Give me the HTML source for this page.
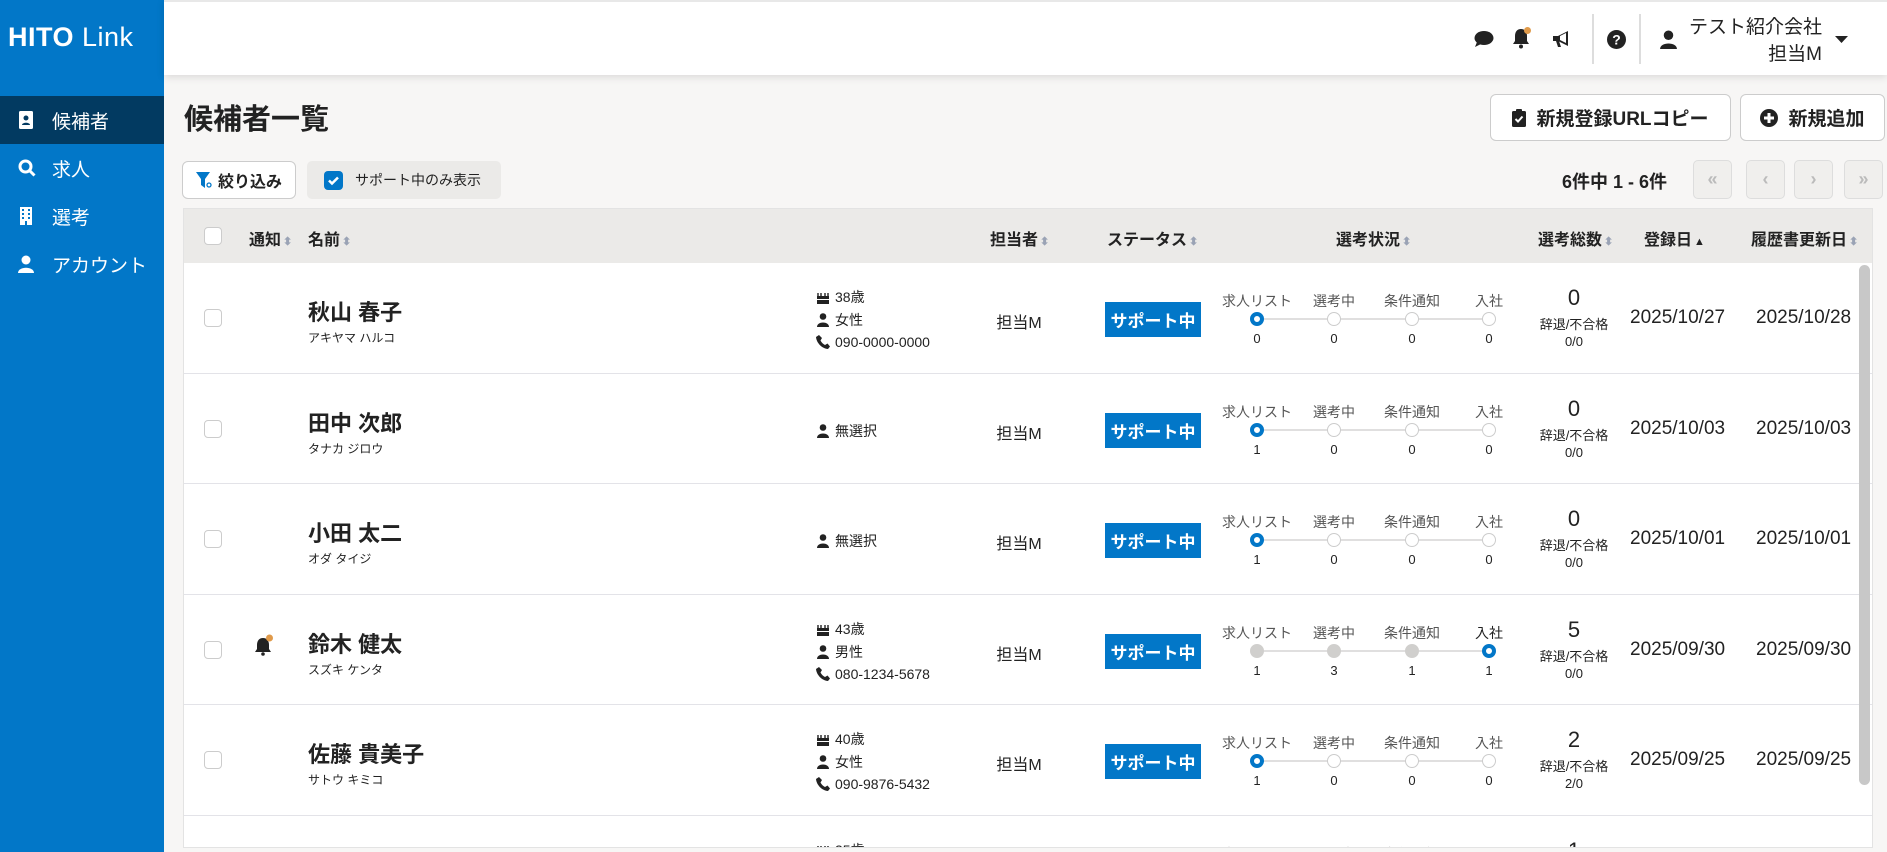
<!DOCTYPE html>
<html><head><meta charset="utf-8"><style>
*{box-sizing:border-box;margin:0;padding:0}
html{width:1887px;height:852px;overflow:hidden}
body{width:1887px;height:852px;overflow:hidden;background:#f7f6f5;font-family:"Liberation Sans","Noto Sans CJK JP",sans-serif;color:#222;position:relative}
.a{position:absolute}
#side{left:0;top:0;width:164px;height:852px;background:#0277c8;color:#fff}
.logo{left:8px;top:22px;font-size:27px;letter-spacing:.5px}
.logo b{font-weight:bold}
.nav{left:0;width:164px;height:48px;font-size:19px;display:flex;align-items:center;padding-left:52px}
.nav svg{position:absolute;left:18px;top:15px}
#top{left:164px;top:0;width:1723px;height:75px;background:#fff;box-shadow:0 2px 8px rgba(0,0,0,.12);border-top:2px solid #e8e8e8}
.btn{background:#fff;border:1px solid #ccc;border-radius:6px;display:flex;align-items:center;justify-content:center;font-weight:bold;font-size:19px;gap:10px}
.pg{width:39px;height:39px;border:1px solid #ddd;border-radius:5px;background:#f0efed;color:#bbb;font-size:18px;display:flex;align-items:center;justify-content:center;font-weight:bold}
#tbl{left:183px;top:208px;width:1690px;height:640px;background:#fff;border:1px solid #e3e3e3;overflow:hidden}
.hd{position:absolute;left:0;top:0;width:100%;height:54px;background:#ebeae8}
.ht{position:absolute;top:17px;font-size:16px;font-weight:bold;white-space:nowrap}
.ht i{font-style:normal;color:#9aa3b5;font-size:11px;margin-left:2px}
.cb{position:absolute;width:18px;height:18px;border:1px solid #ccc;border-radius:4px;background:#fff}
.row{position:absolute;left:0;width:100%;height:110.5px;border-bottom:1px solid #e3e3e8}
.nm{position:absolute;left:124px;top:32px;font-size:22px;font-weight:bold}
.kn{position:absolute;left:124px;top:66px;font-size:12px}
.inf{position:absolute;left:632px;font-size:14px;display:flex;align-items:center;gap:5px;white-space:nowrap}
.tan{position:absolute;left:800px;top:46px;font-size:16px;width:70px;text-align:center;white-space:nowrap}
.bd{position:absolute;left:921px;top:39px;width:96px;height:35px;background:#0277c8;color:#fff;font-weight:bold;font-size:17px;display:flex;align-items:center;justify-content:center}
.sl{position:absolute;top:28px;font-size:14px;color:#555;width:90px;text-align:center;margin-left:-45px}
.ln{position:absolute;left:1073px;top:55px;width:232px;height:2px;background:#e0dfdf}
.ci{position:absolute;top:49px;width:14px;height:14px;margin-left:-7px;border:1.5px solid #ccc;border-radius:50%;background:#fff}
.ci.on{border:4px solid #0277c8}
.ci.g{background:#d0cfcd;border-color:#d0cfcd}
.sn{position:absolute;top:68px;font-size:13px;width:30px;margin-left:-15px;text-align:center}
.tn{position:absolute;left:1360px;top:22px;width:60px;text-align:center;font-size:22px}
.tj{position:absolute;left:1340px;top:53px;width:100px;text-align:center;font-size:13px;line-height:17px}
.dt{position:absolute;top:44px;font-size:19px}
</style></head><body>
<svg width="0" height="0" style="position:absolute">
<defs>
<symbol id="cake" viewBox="0 0 14 14"><path d="M2 3v3M5 3v3M9 3v3M12 3v3" stroke="#222" stroke-width="1.4"/><rect x="1" y="6" width="12" height="3" fill="#222"/><rect x="1" y="10" width="12" height="4" fill="#222"/></symbol>
<symbol id="per" viewBox="0 0 14 14"><circle cx="7" cy="3.5" r="3.3" fill="#222"/><path d="M1 14c0-6 12-6 12 0z" fill="#222"/></symbol>
<symbol id="tel" viewBox="0 0 14 14"><path d="M3 0l3 3-1.5 2.5c1 2 2.5 3.5 4.5 4.5L11.5 8.5l2.5 3-2 2.5C6 13.5 0.5 8 0 2z" fill="#222"/></symbol>
</defs></svg>
<div id="side" class="a">
<div class="a logo"><b>HITO</b> Link</div>
<div class="a nav" style="top:96px;background:#023a61"><svg width="16" height="18" viewBox="0 0 16 18"><rect x="1" y="0" width="14" height="18" rx="1.5" fill="#fff"/><circle cx="8" cy="7" r="2.5" fill="#023a61"/><path d="M4 14c0-3 8-3 8 0z" fill="#023a61"/></svg>候補者</div>
<div class="a nav" style="top:144px"><svg width="18" height="18" viewBox="0 0 18 18"><circle cx="7.5" cy="7.5" r="5.5" stroke="#fff" stroke-width="3" fill="none"/><path d="M11.5 11.5l5 5" stroke="#fff" stroke-width="3"/></svg>求人</div>
<div class="a nav" style="top:192px"><svg width="16" height="18" viewBox="0 0 16 18"><rect x="2" y="0" width="12" height="18" fill="#fff"/><g fill="#0277c8"><rect x="4" y="2" width="2" height="2"/><rect x="10" y="2" width="2" height="2"/><rect x="4" y="6" width="2" height="2"/><rect x="10" y="6" width="2" height="2"/><rect x="4" y="10" width="2" height="2"/><rect x="10" y="10" width="2" height="2"/><rect x="7" y="14" width="2" height="4"/></g></svg>選考</div>
<div class="a nav" style="top:240px"><svg width="16" height="18" viewBox="0 0 16 18"><circle cx="8" cy="5" r="4.5" fill="#fff"/><path d="M0 18c0-7 16-7 16 0z" fill="#fff"/></svg>アカウント</div>
</div>
<div id="top" class="a">
<svg class="a" style="left:1310px;top:28px" width="20" height="18" viewBox="0 0 20 18"><ellipse cx="10" cy="8" rx="9.5" ry="7" fill="#222"/><path d="M3 12l-2 5 6-3z" fill="#222"/></svg>
<svg class="a" style="left:1348px;top:25px" width="20" height="22" viewBox="0 0 20 22"><path d="M9 2c-4 0-6 3-6 7v5l-2 3h16l-2-3V9c0-4-2-7-6-7z" fill="#222"/><circle cx="9" cy="19.5" r="2" fill="#222"/><circle cx="15.5" cy="3.5" r="3.5" fill="#e09a4a"/></svg>
<svg class="a" style="left:1388px;top:28px" width="20" height="18" viewBox="0 0 20 18"><path d="M1 6h5l10-5v15L6 11H1z" fill="#222"/><path d="M4 11l2 6h3l-2-6z" fill="#222"/><path d="M8 6l6-3v10l-6-3z" fill="#fff"/></svg>
<div class="a" style="left:1428px;top:12px;width:2px;height:50px;background:#ddd"></div>
<svg class="a" style="left:1443px;top:28px" width="19" height="19" viewBox="0 0 19 19"><circle cx="9.5" cy="9.5" r="9.5" fill="#222"/><text x="9.5" y="14.5" font-size="14" font-weight="bold" text-anchor="middle" fill="#fff" font-family="Liberation Sans">?</text></svg>
<div class="a" style="left:1475px;top:12px;width:2px;height:50px;background:#ddd"></div>
<svg class="a" style="left:1496px;top:28px" width="17" height="19" viewBox="0 0 16 18"><circle cx="8" cy="5" r="4.5" fill="#222"/><path d="M0 18c0-7 16-7 16 0z" fill="#222"/></svg>
<div class="a" style="right:65px;top:12px;font-size:19px;text-align:right;line-height:27px">テスト紹介会社<br>担当M</div>
<svg class="a" style="left:1671px;top:34px" width="13" height="8"><path d="M0 0h13l-6.5 7z" fill="#222"/></svg>
</div>
<div class="a" style="left:184px;top:96px;font-size:29px;font-weight:bold">候補者一覧</div>
<div class="a btn" style="left:1490px;top:94px;width:241px;height:47px"><svg width="14" height="18" viewBox="0 0 14 18"><rect x="0" y="2" width="14" height="16" rx="1.5" fill="#222"/><rect x="4" y="0" width="6" height="4" rx="1" fill="#222"/><path d="M3.5 10l2.5 2.5 4.5-5" stroke="#fff" stroke-width="2" fill="none"/></svg>新規登録URLコピー</div>
<div class="a btn" style="left:1740px;top:94px;width:145px;height:47px"><svg width="18" height="18"><circle cx="9" cy="9" r="9" fill="#222"/><path d="M9 4v10M4 9h10" stroke="#fff" stroke-width="3"/></svg>新規追加</div>
<div class="a btn" style="left:182px;top:161px;width:114px;height:38px;font-size:16px;gap:6px"><svg width="16" height="17" viewBox="0 0 16 17"><path d="M0 0h14l-5 7v9l-4-3V7z" fill="#0277c8"/><circle cx="13" cy="13" r="2" stroke="#0277c8" stroke-width="1.3" fill="#fff"/></svg>絞り込み</div>
<div class="a" style="left:307px;top:161px;width:194px;height:38px;background:#ebeae8;border-radius:5px;display:flex;align-items:center;padding-left:17px;gap:12px;font-size:14px"><svg width="19" height="19"><rect width="19" height="19" rx="4" fill="#0277c8"/><path d="M5 9.5l3 3 6-6" stroke="#fff" stroke-width="2.5" fill="none"/></svg>サポート中のみ表示</div>
<div class="a" style="left:1562px;top:168px;font-size:18px;font-weight:bold">6件中 1 - 6件</div>
<div class="a pg" style="left:1693px;top:160px">«</div>
<div class="a pg" style="left:1746px;top:160px">‹</div>
<div class="a pg" style="left:1794px;top:160px">›</div>
<div class="a pg" style="left:1844px;top:160px">»</div>
<div id="tbl" class="a">
<div class="hd">
<div class="cb" style="left:20px;top:18px"></div>
<div class="ht" style="left:65px">通知<i>⬍</i></div>
<div class="ht" style="left:124px">名前<i>⬍</i></div>
<div class="ht" style="left:806px">担当者<i>⬍</i></div>
<div class="ht" style="left:923px">ステータス<i>⬍</i></div>
<div class="ht" style="left:1152px">選考状況<i>⬍</i></div>
<div class="ht" style="left:1354px">選考総数<i>⬍</i></div>
<div class="ht" style="left:1460px">登録日<i style="color:#222">▲</i></div>
<div class="ht" style="left:1567px">履歴書更新日<i>⬍</i></div>
</div>

<div class="row" style="top:54px">
<div class="cb" style="left:20px;top:46px"></div>
<div class="nm">秋山 春子</div><div class="kn">アキヤマ ハルコ</div>
<div class="inf" style="top:24px"><svg width="14" height="14"><use href="#cake"/></svg>38歳</div><div class="inf" style="top:47px"><svg width="14" height="14"><use href="#per"/></svg>女性</div><div class="inf" style="top:71px"><svg width="14" height="14"><use href="#tel"/></svg>090-0000-0000</div>
<div class="tan">担当M</div><div class="bd">サポート中</div>
<div class="sl" style="left:1073px">求人リスト</div><div class="sl" style="left:1150px">選考中</div><div class="sl" style="left:1228px">条件通知</div><div class="sl" style="left:1305px">入社</div>
<div class="ln"></div><div class="ci on" style="left:1073px"></div><div class="ci" style="left:1150px"></div><div class="ci" style="left:1228px"></div><div class="ci" style="left:1305px"></div>
<div class="sn" style="left:1073px">0</div><div class="sn" style="left:1150px">0</div><div class="sn" style="left:1228px">0</div><div class="sn" style="left:1305px">0</div>
<div class="tn">0</div><div class="tj">辞退/不合格<br>0/0</div>
<div class="dt" style="left:1446px">2025/10/27</div><div class="dt" style="left:1572px">2025/10/28</div>
</div>

<div class="row" style="top:164.5px">
<div class="cb" style="left:20px;top:46px"></div>
<div class="nm">田中 次郎</div><div class="kn">タナカ ジロウ</div>
<div class="inf" style="top:47px"><svg width="14" height="14"><use href="#per"/></svg>無選択</div>
<div class="tan">担当M</div><div class="bd">サポート中</div>
<div class="sl" style="left:1073px">求人リスト</div><div class="sl" style="left:1150px">選考中</div><div class="sl" style="left:1228px">条件通知</div><div class="sl" style="left:1305px">入社</div>
<div class="ln"></div><div class="ci on" style="left:1073px"></div><div class="ci" style="left:1150px"></div><div class="ci" style="left:1228px"></div><div class="ci" style="left:1305px"></div>
<div class="sn" style="left:1073px">1</div><div class="sn" style="left:1150px">0</div><div class="sn" style="left:1228px">0</div><div class="sn" style="left:1305px">0</div>
<div class="tn">0</div><div class="tj">辞退/不合格<br>0/0</div>
<div class="dt" style="left:1446px">2025/10/03</div><div class="dt" style="left:1572px">2025/10/03</div>
</div>

<div class="row" style="top:275px">
<div class="cb" style="left:20px;top:46px"></div>
<div class="nm">小田 太二</div><div class="kn">オダ タイジ</div>
<div class="inf" style="top:47px"><svg width="14" height="14"><use href="#per"/></svg>無選択</div>
<div class="tan">担当M</div><div class="bd">サポート中</div>
<div class="sl" style="left:1073px">求人リスト</div><div class="sl" style="left:1150px">選考中</div><div class="sl" style="left:1228px">条件通知</div><div class="sl" style="left:1305px">入社</div>
<div class="ln"></div><div class="ci on" style="left:1073px"></div><div class="ci" style="left:1150px"></div><div class="ci" style="left:1228px"></div><div class="ci" style="left:1305px"></div>
<div class="sn" style="left:1073px">1</div><div class="sn" style="left:1150px">0</div><div class="sn" style="left:1228px">0</div><div class="sn" style="left:1305px">0</div>
<div class="tn">0</div><div class="tj">辞退/不合格<br>0/0</div>
<div class="dt" style="left:1446px">2025/10/01</div><div class="dt" style="left:1572px">2025/10/01</div>
</div>

<div class="row" style="top:385.5px">
<div class="cb" style="left:20px;top:46px"></div>
<svg style="position:absolute;left:70px;top:39px" width="20" height="22" viewBox="0 0 20 22"><path d="M9 4c-4 0-6 3-6 7v4l-2 3h16l-2-3v-4c0-4-2-7-6-7z" fill="#222"/><circle cx="9" cy="20" r="1.8" fill="#222"/><circle cx="15.5" cy="4" r="3.5" fill="#e09a4a"/></svg>
<div class="nm">鈴木 健太</div><div class="kn">スズキ ケンタ</div>
<div class="inf" style="top:24px"><svg width="14" height="14"><use href="#cake"/></svg>43歳</div><div class="inf" style="top:47px"><svg width="14" height="14"><use href="#per"/></svg>男性</div><div class="inf" style="top:71px"><svg width="14" height="14"><use href="#tel"/></svg>080-1234-5678</div>
<div class="tan">担当M</div><div class="bd">サポート中</div>
<div class="sl" style="left:1073px">求人リスト</div><div class="sl" style="left:1150px">選考中</div><div class="sl" style="left:1228px">条件通知</div><div class="sl" style="left:1305px;color:#222">入社</div>
<div class="ln"></div><div class="ci g" style="left:1073px"></div><div class="ci g" style="left:1150px"></div><div class="ci g" style="left:1228px"></div><div class="ci on" style="left:1305px"></div>
<div class="sn" style="left:1073px">1</div><div class="sn" style="left:1150px">3</div><div class="sn" style="left:1228px">1</div><div class="sn" style="left:1305px">1</div>
<div class="tn">5</div><div class="tj">辞退/不合格<br>0/0</div>
<div class="dt" style="left:1446px">2025/09/30</div><div class="dt" style="left:1572px">2025/09/30</div>
</div>

<div class="row" style="top:496px">
<div class="cb" style="left:20px;top:46px"></div>
<div class="nm">佐藤 貴美子</div><div class="kn">サトウ キミコ</div>
<div class="inf" style="top:24px"><svg width="14" height="14"><use href="#cake"/></svg>40歳</div><div class="inf" style="top:47px"><svg width="14" height="14"><use href="#per"/></svg>女性</div><div class="inf" style="top:71px"><svg width="14" height="14"><use href="#tel"/></svg>090-9876-5432</div>
<div class="tan">担当M</div><div class="bd">サポート中</div>
<div class="sl" style="left:1073px">求人リスト</div><div class="sl" style="left:1150px">選考中</div><div class="sl" style="left:1228px">条件通知</div><div class="sl" style="left:1305px">入社</div>
<div class="ln"></div><div class="ci on" style="left:1073px"></div><div class="ci" style="left:1150px"></div><div class="ci" style="left:1228px"></div><div class="ci" style="left:1305px"></div>
<div class="sn" style="left:1073px">1</div><div class="sn" style="left:1150px">0</div><div class="sn" style="left:1228px">0</div><div class="sn" style="left:1305px">0</div>
<div class="tn">2</div><div class="tj">辞退/不合格<br>2/0</div>
<div class="dt" style="left:1446px">2025/09/25</div><div class="dt" style="left:1572px">2025/09/25</div>
</div>

<div class="row" style="top:606.5px">
<div class="inf" style="top:24px"><svg width="14" height="14"><use href="#cake"/></svg>35歳</div>
<div class="sl" style="left:1073px">求人リスト</div><div class="sl" style="left:1150px">選考中</div><div class="sl" style="left:1228px">条件通知</div>
<div class="tn">1</div>
</div>
<div style="position:absolute;right:2px;top:56px;width:11px;height:520px;background:#c8c8c8;border-radius:6px"></div>
</div>
</body></html>
